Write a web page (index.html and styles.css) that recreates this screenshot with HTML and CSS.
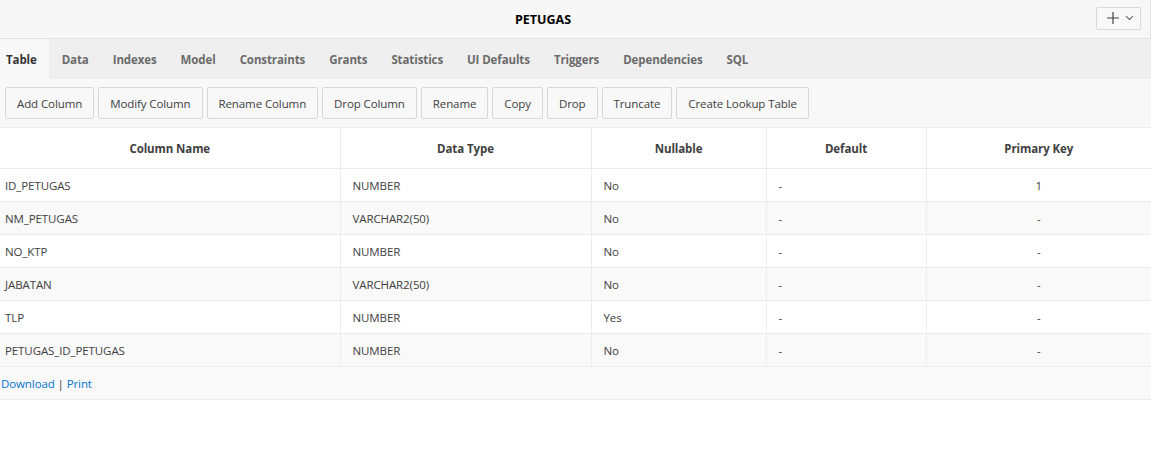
FILE: index.html
```html
<!DOCTYPE html>
<html>
<head>
<meta charset="utf-8">
<link rel="stylesheet" href="styles.css">
</head>
<body>
<div class="page">
  <header class="topbar">
    <div class="title">PETUGAS</div>
    <div class="top-actions">
      <button class="addbtn" type="button">
        <svg width="14" height="14" viewBox="0 0 14 14"><path d="M7 1v12M1 7h12" stroke="#444" stroke-width="1.2" fill="none"/></svg>
        <svg width="9" height="6" viewBox="0 0 9 6"><path d="M1 1.2l3.5 3.3L8 1.2" stroke="#666" stroke-width="1.1" fill="none"/></svg>
      </button>
    </div>
  </header>
  <nav class="tabs">
    <span class="tab active">Table</span>
    <span class="tab">Data</span>
    <span class="tab">Indexes</span>
    <span class="tab">Model</span>
    <span class="tab">Constraints</span>
    <span class="tab">Grants</span>
    <span class="tab">Statistics</span>
    <span class="tab">UI Defaults</span>
    <span class="tab">Triggers</span>
    <span class="tab">Dependencies</span>
    <span class="tab">SQL</span>
  </nav>
  <div class="toolbar">
    <button class="btn" type="button">Add Column</button>
    <button class="btn" type="button">Modify Column</button>
    <button class="btn" type="button">Rename Column</button>
    <button class="btn" type="button">Drop Column</button>
    <button class="btn" type="button">Rename</button>
    <button class="btn" type="button">Copy</button>
    <button class="btn" type="button">Drop</button>
    <button class="btn" type="button">Truncate</button>
    <button class="btn" type="button">Create Lookup Table</button>
  </div>
  <table class="grid">
    <colgroup>
      <col class="c1"><col class="c2"><col class="c3"><col class="c4"><col class="c5">
    </colgroup>
    <thead>
      <tr><th>Column Name</th><th>Data Type</th><th>Nullable</th><th>Default</th><th>Primary Key</th></tr>
    </thead>
    <tbody>
      <tr><td class="first">ID_PETUGAS</td><td>NUMBER</td><td>No</td><td>-</td><td class="center">1</td></tr>
      <tr><td class="first">NM_PETUGAS</td><td>VARCHAR2(50)</td><td>No</td><td>-</td><td class="center">-</td></tr>
      <tr><td class="first">NO_KTP</td><td>NUMBER</td><td>No</td><td>-</td><td class="center">-</td></tr>
      <tr><td class="first">JABATAN</td><td>VARCHAR2(50)</td><td>No</td><td>-</td><td class="center">-</td></tr>
      <tr><td class="first">TLP</td><td>NUMBER</td><td>Yes</td><td>-</td><td class="center">-</td></tr>
      <tr><td class="first">PETUGAS_ID_PETUGAS</td><td>NUMBER</td><td>No</td><td>-</td><td class="center">-</td></tr>
    </tbody>
  </table>
  <div class="footer"><a href="#">Download</a> | <a href="#">Print</a></div>
</div>
</body>
</html>
```
FILE: styles.css
```css
html, body {
  margin: 0;
  padding: 0;
  background: #ffffff;
}
body {
  font-family: "Open Sans", "Noto Sans", "Liberation Sans", sans-serif;
  font-size: 11.5px;
  letter-spacing: -0.1px;
  color: #404040;
}
.page {
  width: 1151px;
}
.topbar {
  display: flex;
  align-items: center;
  background: #f7f7f7;
  border-bottom: 1px solid #e2e2e2;
  border-right: 1px solid #e2e2e2;
  box-sizing: border-box;
  height: 39px;
}
.title {
  flex: 1;
  text-align: center;
  font-weight: 700;
  font-size: 12.5px;
  letter-spacing: 0;
  color: #000;
}
.top-actions {
  width: 64px;
  display: flex;
  justify-content: flex-end;
  padding-right: 9px;
  box-sizing: border-box;
}
.addbtn {
  width: 45px;
  height: 23px;
  display: flex;
  align-items: center;
  justify-content: center;
  gap: 5px;
  padding: 0 0 0 2px;
  background: #f8f8f8;
  border: 1px solid #d9d9d9;
  border-radius: 2px;
  margin-top: -2px;
}
.tabs {
  display: flex;
  height: 40px;
  background: #efefef;
  align-items: stretch;
}
.tab {
  display: flex;
  align-items: center;
  padding: 0 12px 0 13px;
  font-weight: 700;
  color: #6b6b6b;
  margin-right: -1px;
}
.tab.active {
  background: #f8f8f8;
  color: #333;
  padding-left: 6px;
  padding-right: 12px;
  margin-right: 0;
}
.toolbar {
  display: flex;
  gap: 4px;
  padding: 8px 5px 8px 5px;
  background: #f8f8f8;
  border-bottom: 1px solid #ececec;
}
.btn {
  height: 32px;
  padding: 0 11px;
  font-family: inherit;
  font-size: 11.5px;
  letter-spacing: -0.1px;
  color: #404040;
  background: #f8f8f8;
  border: 1px solid #d8d8d8;
  border-radius: 2px;
}
.grid {
  width: 1151px;
  border-collapse: collapse;
  table-layout: fixed;
}
.c1 { width: 340px; }
.c2 { width: 251px; }
.c3 { width: 175px; }
.c4 { width: 160px; }
.c5 { width: 225px; }
.grid th {
  height: 40px;
  font-weight: 700;
  color: #404040;
  text-align: center;
  background: #fff;
  border-bottom: 1px solid #ececec;
  border-left: 1px solid #ececec;
  padding: 0;
}
.grid th:first-child { border-left: none; }
.grid td {
  height: 32px;
  padding: 0 0 0 12px;
  border-bottom: 1px solid #ececec;
  border-left: 1px solid #ececec;
  color: #404040;
  white-space: nowrap;
}
.grid td.first {
  padding-left: 5px;
  border-left: none;
}
.grid td.center {
  text-align: center;
  padding-left: 0;
}
.grid tbody tr:nth-child(odd) td { background: #ffffff; }
.grid tbody tr:nth-child(even) td { background: #f9f9f9; }
.footer {
  height: 32px;
  line-height: 33px;
  padding-left: 1px;
  background: #f9f9f9;
  border-bottom: 1px solid #ececec;
  color: #404040;
}
.footer a {
  color: #0572ce;
  text-decoration: none;
}
```
